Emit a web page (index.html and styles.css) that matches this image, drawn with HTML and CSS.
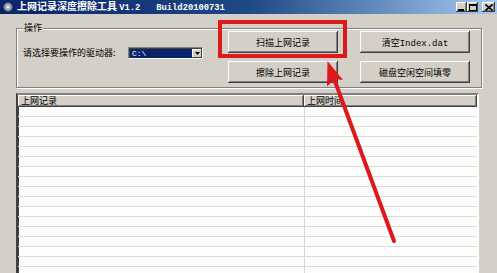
FILE: index.html
```html
<!DOCTYPE html>
<html>
<head>
<meta charset="utf-8">
<link rel="stylesheet" href="styles.css">
</head>
<body>
<div class="window">
  <div class="titlebar">
    <span class="app-icon">
      <svg width="10" height="10" viewBox="0 0 10 10"><circle cx="5" cy="5" r="4.2" fill="#9aa4b4" stroke="#5a6270" stroke-width="1"/><circle cx="5" cy="5" r="1.6" fill="#e4e8ee"/></svg>
    </span>
    <span class="title">上网记录深度擦除工具 <span class="mono">V1.2   Build20100731</span></span>
    <div class="caption-btns">
      <span class="cap"><svg width="7" height="7" viewBox="0 0 7 7"><rect x="0" y="5" width="6" height="2" fill="#000"/></svg></span>
      <span class="cap"><svg width="8" height="7" viewBox="0 0 8 7"><rect x="0.5" y="0.5" width="7" height="6" fill="none" stroke="#000"/><rect x="0" y="0" width="8" height="2" fill="#000"/></svg></span>
      <span class="cap close"><svg width="8" height="7" viewBox="0 0 8 7"><path d="M0.5 0.5 L7.5 6.5 M7.5 0.5 L0.5 6.5" stroke="#000" stroke-width="1.6"/></svg></span>
    </div>
  </div>
  <div class="main">
    <div class="group">
      <span class="group-title">操作</span>
      <div class="drive">
        <span class="drive-label">请选择要操作的驱动器:</span>
        <div class="combo">
          <span class="combo-value mono">C:\</span>
          <span class="combo-btn"><svg width="5" height="3" viewBox="0 0 5 3"><path d="M0 0 H5 L2.5 3 Z" fill="#000"/></svg></span>
        </div>
      </div>
      <div class="buttons">
        <button class="btn">扫描上网记录</button>
        <button class="btn">清空<span class="mono">Index.dat</span></button>
        <button class="btn">擦除上网记录</button>
        <button class="btn">磁盘空闲空间填零</button>
      </div>
    </div>
    <div class="list">
      <div class="list-head">
        <div class="hcell col1">上网记录</div>
        <div class="hcell col2">上网时间</div>
      </div>
      <div class="rows">
        <div class="row"><div class="cell col1"></div><div class="cell col2"></div></div>
        <div class="row"><div class="cell col1"></div><div class="cell col2"></div></div>
        <div class="row"><div class="cell col1"></div><div class="cell col2"></div></div>
        <div class="row"><div class="cell col1"></div><div class="cell col2"></div></div>
        <div class="row"><div class="cell col1"></div><div class="cell col2"></div></div>
        <div class="row"><div class="cell col1"></div><div class="cell col2"></div></div>
        <div class="row"><div class="cell col1"></div><div class="cell col2"></div></div>
        <div class="row"><div class="cell col1"></div><div class="cell col2"></div></div>
        <div class="row"><div class="cell col1"></div><div class="cell col2"></div></div>
        <div class="row"><div class="cell col1"></div><div class="cell col2"></div></div>
        <div class="row"><div class="cell col1"></div><div class="cell col2"></div></div>
        <div class="row"><div class="cell col1"></div><div class="cell col2"></div></div>
        <div class="row"><div class="cell col1"></div><div class="cell col2"></div></div>
        <div class="row"><div class="cell col1"></div><div class="cell col2"></div></div>
        <div class="row"><div class="cell col1"></div><div class="cell col2"></div></div>
        <div class="row"><div class="cell col1"></div><div class="cell col2"></div></div>
        <div class="row"><div class="cell col1"></div><div class="cell col2"></div></div>
      </div>
    </div>
  </div>
  <div class="highlight"></div>
  <svg class="arrow" width="497" height="273" viewBox="0 0 497 273">
    <line x1="334.5" y1="80" x2="394" y2="241" stroke="#dc1a1c" stroke-width="4" stroke-linecap="round"/>
    <polygon points="327.5,61 343,80 335,79 327,86.5" fill="#dc1a1c"/>
  </svg>
</div>
</body>
</html>
```
FILE: styles.css
```css
body {
  margin: 0;
  background: #d4d0c8;
  font-family: "Noto Sans CJK SC", "Noto Sans", sans-serif;
  font-size: 9px;
  color: #000;
}
.mono {
  font-family: "Liberation Mono", "Noto Sans CJK SC", monospace;
}
.window {
  position: relative;
  width: 497px;
  height: 273px;
  overflow: hidden;
  background: #d4d0c8;
}
.titlebar {
  height: 14px;
  display: flex;
  align-items: center;
  padding-left: 3px;
  color: #fff;
  background: linear-gradient(to right, #0a246a 0%, #1e4886 50%, #a6caf0 100%);
}
.app-icon {
  display: flex;
  width: 10px;
  height: 10px;
  margin-right: 4px;
}
.title {
  font-weight: bold;
  font-size: 10px;
  line-height: 12px;
  white-space: pre;
}
.title .mono {
  font-size: 8.8px;
}
.caption-btns {
  margin-left: auto;
  margin-right: 2px;
  display: flex;
}
.cap {
  width: 11px;
  height: 10px;
  background: #d4d0c8;
  box-shadow: inset -1px -1px #404040, inset 1px 1px #fff, inset -2px -2px #808080;
  display: flex;
  align-items: center;
  justify-content: center;
}
.cap.close {
  width: 13px;
  margin-left: 4px;
}
.main {
  padding: 14px 15px 0 16px;
}
.group {
  position: relative;
  display: flex;
  align-items: flex-start;
  padding: 2px 11px 4px 0;
  border: 1px solid #808080;
  box-shadow: inset 1px 1px #fff, 1px 1px #fff;
}
.group-title {
  position: absolute;
  left: 6px;
  top: -7px;
  padding: 0 1px;
  background: #d4d0c8;
  line-height: 12px;
}
.drive {
  flex: 0 0 211px;
  display: flex;
  align-items: center;
  margin-top: 15px;
  padding-left: 6px;
  box-sizing: border-box;
}
.drive-label {
  width: 105px;
  white-space: nowrap;
}
.combo {
  width: 75px;
  height: 12px;
  box-sizing: border-box;
  display: flex;
  border: 1px solid;
  border-color: #808080 #fff #fff #808080;
  box-shadow: inset 1px 1px #404040;
  background: #fff;
  padding: 1px 0 0 1px;
}
.combo-value {
  flex: 1;
  background: #0a246a;
  color: #fff;
  font-size: 8px;
  line-height: 9px;
  padding-left: 2px;
}
.combo-btn {
  width: 10px;
  background: #d4d0c8;
  box-shadow: inset -1px -1px #404040, inset 1px 1px #fff;
  display: flex;
  align-items: center;
  justify-content: center;
}
.buttons {
  display: grid;
  grid-template-columns: 110px 110px;
  grid-auto-rows: 22px;
  column-gap: 22px;
  row-gap: 8px;
}
.btn {
  margin: 0;
  padding: 0;
  border: 0;
  font-family: "Noto Sans CJK SC", "Noto Sans", sans-serif;
  font-size: 9px;
  color: #000;
  background: #d4d0c8;
  box-shadow: inset -1px -1px #404040, inset 1px 1px #fff, inset -2px -2px #808080;
}
.btn .mono {
  font-size: 9px;
}
.list {
  margin: 5px 3px 0 0;
  height: 185px;
  border: 2px solid;
  border-color: #808080 #fff #fff #404040;
  box-shadow: inset 1px 1px #404040;
  background: #fdfdfb;
  overflow: hidden;
}
.list-head {
  display: flex;
  height: 12px;
}
.hcell {
  box-sizing: border-box;
  height: 12px;
  line-height: 12px;
  padding-left: 3px;
  background: #d4d0c8;
  box-shadow: inset -1px -1px #404040, inset 1px 1px #fff, inset -2px -2px #808080;
}
.col1 {
  width: 286px;
  flex: 0 0 286px;
}
.col2 {
  flex: 1;
}
.row {
  display: flex;
  height: 10px;
  box-sizing: border-box;
  border-bottom: 1px solid #dcdcdc;
}
.cell.col1 {
  border-right: 1px solid #d6d6d6;
}
.highlight {
  position: absolute;
  left: 218px;
  top: 20px;
  width: 129px;
  height: 38px;
  box-sizing: border-box;
  border: 4px solid #dc1a1c;
}
.arrow {
  position: absolute;
  left: 0;
  top: 0;
  pointer-events: none;
}
```
